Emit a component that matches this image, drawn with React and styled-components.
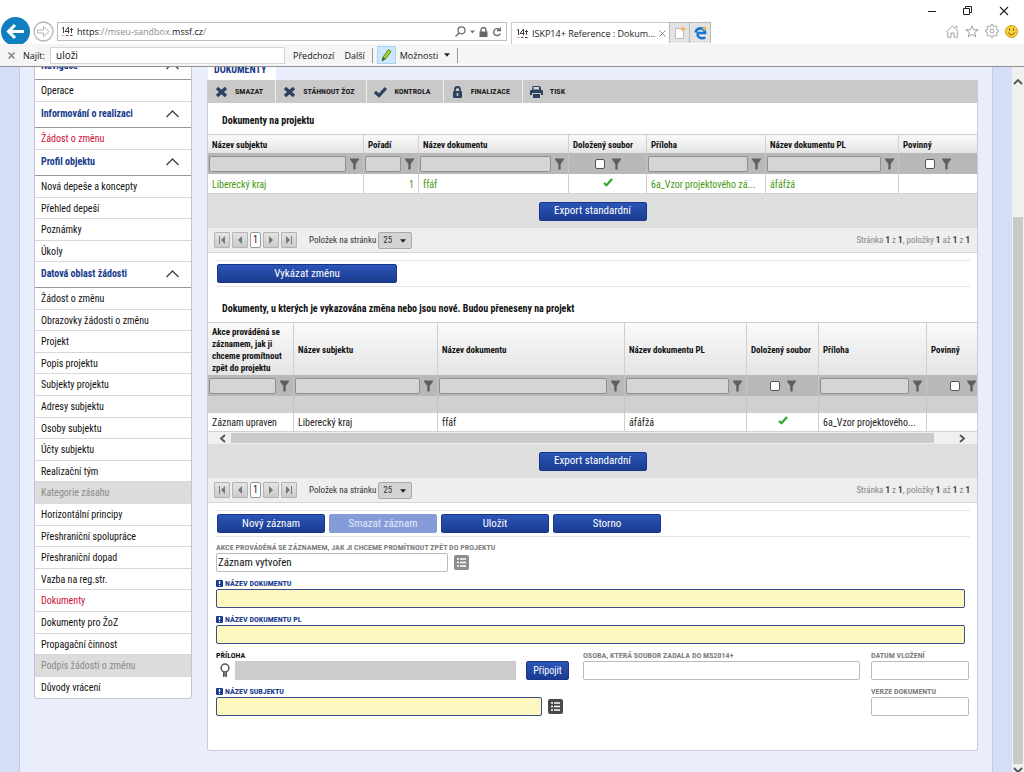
import React from "react";
import styled, { createGlobalStyle, css } from "styled-components";

const narrow = '"Roboto Condensed", "Liberation Sans Narrow", Roboto, sans-serif';
const chrome = '"Open Sans", "Noto Sans", sans-serif';

const GlobalStyle = createGlobalStyle`
  *, *::before, *::after { box-sizing: border-box; }
  body { margin: 0; font-family: ${narrow}; font-size: 10px; color: #222; background: #fff; }
  button, input, select { font: inherit; color: inherit; margin: 0; padding: 0; border: 0; border-radius: 0; outline: none; }
  button { background: none; white-space: nowrap; }
  svg { display: block; flex: none; }
  h2, ul, form { margin: 0; padding: 0; }
  a { color: inherit; text-decoration: none; }
`;

/* ---------- browser window ---------- */
const Window = styled.div`
  display: flex; flex-direction: column; height: 100vh; overflow: hidden;
`;
const WindowControls = styled.div`
  flex: none; display: flex; justify-content: flex-end; align-items: center; gap: 26px;
  height: 22px; padding-right: 15px;
`;
const NavBar = styled.div`
  flex: none; display: flex; height: 22px; font-family: ${chrome}; font-size: 9px; color: #222;
`;
const NavIcons = styled.div`
  display: flex; align-items: center; gap: 3px; width: 57px; padding: 0 2px 4px 1px;
`;
const Address = styled.div`
  display: flex; align-items: center; width: 450px; height: 19px; padding: 0 4px 0 3px;
  border: 1px solid #bdbdbd; background: #fff;
`;
const AddressText = styled.div`
  flex: 1; margin-left: 4px; color: #8a8a8a;
  b { font-weight: 400; color: #111; }
`;
const AddressIcons = styled.div`
  display: flex; align-items: center; gap: 4px;
`;
const BrowserTab = styled.div`
  display: flex; align-items: center; gap: 4px; width: 158px; margin-left: 4px; padding-left: 4px;
  border-left: 1px solid #ccc; border-top: 1px solid #ccc; white-space: nowrap; color: #222;
  svg:last-child { margin: 0 4px 0 auto; }
`;
const TabButton = styled.button`
  display: flex; align-items: center; justify-content: center; width: 21px; height: 21px;
  background: #e3e3e3; border: 1px solid #b9b9b9; border-bottom: 0;
  & + & { border-left: 0; }
`;
const BrowserTools = styled.div`
  display: flex; align-items: center; gap: 6px; margin-left: auto; padding: 0 6px 4px 0;
`;
const FindBar = styled.div`
  flex: none; display: flex; align-items: center; height: 23px; padding: 0 8px; border-bottom: 1px solid #909090;
  background: #f5f5f5; font-family: ${chrome}; font-size: 9px; color: #111;
  label { width: 27px; margin-left: 8px; }
`;
const FindInput = styled.input`
  width: 235px; height: 17px; padding: 0 5px; border: 1px solid #d5d5d5; background: #fff; font-size: 10px;
`;
const FindButton = styled.button`
  display: flex; align-items: center; gap: 6px; margin-left: ${(p) => p.$gap}px; height: 18px;
`;
const Highlight = styled.button`
  display: flex; align-items: center; justify-content: center; width: 19px; height: 18px;
  background: #cce6fb; border: 1px solid #a9d1f3;
`;
const Bar = styled.span`
  width: 1px; height: 15px; background: #999; margin: 0 4px 0 7px;
`;

/* ---------- page frame ---------- */
const Viewport = styled.div`
  flex: 1; min-height: 0; display: flex; background: #d6def7;
`;
const Sheet = styled.div`
  flex: 1; min-width: 0; display: flex; align-items: flex-start; gap: 15px; overflow: hidden;
  margin: 0 19px; padding: 0 14px; background: #eaeefc;
  border-left: 1px solid #c3cbe3; border-right: 1px solid #c0cae8;
`;
const Scrollbar = styled.div`
  display: flex; flex-direction: column; align-items: center; width: 12px; background: #f0f0f0;
  padding-top: 11px;
`;
const ScrollThumb = styled.div`
  flex: 1; width: 10px; margin: 132px 0 3px; background: #c9c9c9;
`;

/* ---------- side menu ---------- */
const Sidebar = styled.nav`
  flex: none; width: 158px; margin-top: -14px; border: 1px solid #c3c6cf; border-radius: 0 0 3px 3px;
  background: #fff; color: #111;
`;
const Group = styled.button`
  display: flex; align-items: center; justify-content: space-between; width: 100%; height: 26px;
  padding: 0 12px 2px 6px; border-bottom: 1px solid #999; font-weight: 700; color: #173a8c;
`;
const Items = styled.ul`
  list-style: none;
`;
/* Rows average a little under 22px, so two of every five are one pixel shorter. */
const Item = styled.li`
  height: 22px;
  border-bottom: 1px solid #d8d8d8;
  &:nth-child(5n + 2), &:nth-child(5n + 4) { height: 21px; }
  ${Items}:last-child > &:last-child { border-bottom: 0; }
  a {
    display: flex; align-items: center; height: 100%; padding: 0 6px;
    ${(p) => p.$tone === "active" && css`color: #cf1034;`}
    ${(p) => p.$tone === "off" && css`color: #8b8b8b; background: #dcdcdc;`}
  }
`;

/* ---------- main panel ---------- */
const Panel = styled.main`
  flex: 1; min-width: 0;
`;
const PanelTab = styled.div`
  display: flex; align-items: center; width: 68px; height: 22px; margin: -9px 0 0 1px; padding: 0 6px;
  background: #fff; font-weight: 700; color: #173a8c;
`;
const PanelBody = styled.div`
  border: 1px solid #c9ccd6; border-top: 0; border-radius: 0 0 3px 3px; background: #fff;
  padding-bottom: 34px;
`;
const Toolbar = styled.div`
  display: flex; height: 23px; background: #c9c9c9;
`;
const Tool = styled.button`
  display: flex; align-items: center; gap: 7px; padding: 0 12px 0 7px; font-size: 8px; font-weight: 700; color: #222;
  border-right: 1px solid #eee;
  &:last-child { border-right: 0; }
`;
const Title = styled.h2`
  padding: ${(p) => p.$top}px 14px 0; height: ${(p) => p.$top + 20}px; font-size: 10px; line-height: 14px;
  font-weight: 700; color: #111;
`;
const Grid = styled.table`
  width: 100%; table-layout: fixed; border-collapse: separate; border-spacing: 0; border-top: 1px solid #ccc;
  th, td { padding: 0 4px; border-right: 1px solid #cfcfcf; overflow: hidden; white-space: nowrap; text-align: left; }
  th:last-child, td:last-child { border-right: 0; }
`;
const HeadRow = styled.tr`
  height: ${(p) => p.$h}px; background: linear-gradient(#fafafa, #e4e4e4); font-size: 9px; color: #111;
  th { padding-top: 1px; line-height: 12px; font-weight: 700; background: none; }
  th:first-child { white-space: pre-line; }
`;
const FilterRow = styled.tr`
  height: 21px; background: #b8b8b8;
  td { padding: 0 4px 0 1px; border-right-color: #c4c4c4; overflow: hidden; }
`;
const SpacerRow = styled.tr`
  height: 17px; background: #d0d0d0;
  td { border-right-color: #c4c4c4; }
`;
const DataRow = styled.tr`
  height: ${(p) => (p.$green ? 20 : 19)}px; color: ${(p) => (p.$green ? "#46990f" : "#222")};
  td { padding-top: 2px; border-bottom: 1px solid #d2d2d2; line-height: 16px; }
`;
const FilterCell = styled.div`
  display: flex; align-items: center; gap: 4px; height: 21px;
  justify-content: ${(p) => (p.$check ? "center" : "flex-start")};
  ${(p) => p.$check && css`gap: 7px; padding-left: 3px;`}
  ${(p) => p.$cut && css`justify-content: flex-end; padding: 0; margin-right: -3px;`}
`;
const FilterInput = styled.input`
  flex: 1; min-width: 0; height: 16px; padding: 0 3px; background: #d5d5d5; border: 1px solid #8f8f8f; border-radius: 2px;
`;
const Tick = styled.input`
  appearance: none; width: 10px; height: 10px; background: #fff; border: 1px solid #555; border-radius: 2px;
`;
const Center = styled.div`
  display: flex; justify-content: center; padding-bottom: 5px;
`;
const Right = styled.div`
  text-align: right;
`;
const HScroll = styled.div`
  display: flex; align-items: center; height: 12px; padding: 0 11px; background: #f0f0f0;
`;
const HThumb = styled.div`
  flex: 1; height: 10px; margin: 0 24px 0 4px; background: #cacaca;
`;
const ExportBand = styled.div`
  display: flex; justify-content: center; align-items: center; height: 34px; background: #dedede;
`;
const Action = styled.button`
  flex: none; width: ${(p) => p.$w}px; height: 19px; border-radius: 2px; border: 1px solid #1a3585;
  background: linear-gradient(#2a55b8, #1b3b8f); color: #fff; font-size: ${(p) => p.$size || 11}px; line-height: 16px;
  &:disabled { background: #859cd8; border-color: #859cd8; color: #e6ebf8; }
`;
const Pager = styled.div`
  display: flex; align-items: center; height: 25px; padding: 0 7px 0 6px; background: #eee; border-bottom: 1px solid #d6d6d6;
  font-size: 9px; color: #333;
`;
const PageButton = styled.button`
  display: flex; align-items: center; justify-content: center; width: 16px; height: 16px; margin-right: 2px;
  border: 1px solid #b4b4b4; border-radius: 1px; background: linear-gradient(#e4e4e4, #cbcbcb);
`;
const PageNumber = styled.span`
  width: 11px; height: 16px; margin-right: 2px; border: 1px solid #999; border-radius: 2px; background: #fff;
  font-size: 10px; line-height: 14px; text-align: center; color: #111;
`;
const SizeLabel = styled.label`
  display: flex; align-items: center; gap: 2px; margin-left: 10px;
`;
const SelectBox = styled.span`
  position: relative; width: 34px; height: 17px;
  select {
    appearance: none; width: 100%; height: 100%; padding-left: 4px; background: #d3d3d3;
    border: 1px solid #a9a9a9; border-radius: 2px;
  }
  svg { position: absolute; right: 6px; top: 7px; pointer-events: none; }
`;
const Summary = styled.div`
  margin-left: auto; color: #888;
  b { font-weight: 700; color: #444; }
`;
const Actions = styled.div`
  display: flex; align-items: center; gap: 4px; height: 27px; margin: 7px 7px 0; padding-left: 2px;
  border-top: 1px solid #e6e6e6; border-bottom: 1px solid #e6e6e6;
`;

/* ---------- form ---------- */
const Form = styled.form`
  display: grid; grid-template-columns: 356px minmax(0, 1fr) 98px; column-gap: 11px; row-gap: 6px;
  padding: 5px 8px 0;
`;
const Field = styled.div`
  grid-column: ${(p) => p.$col || "auto"};
  ${(p) => p.$wide && css`padding-right: 4px;`}
`;
const Label = styled.label`
  display: flex; align-items: center; gap: 2px; height: 11px; font-size: 8px; line-height: 11px; font-weight: 700;
  text-transform: uppercase; white-space: nowrap; color: ${(p) => p.$color || "#808080"};
`;
const Line = styled.div`
  display: flex; align-items: center; height: 19px;
`;
const Text = styled.input`
  flex: ${(p) => (p.$w ? "none" : 1)}; width: ${(p) => (p.$w ? p.$w + "px" : "auto")}; min-width: 0; height: 19px;
  padding: 0 1px; border: 1px solid #bbb; border-radius: 2px; background: #fff; color: #111; font-size: 11px;
  ${(p) => p.$need && css`background: #fcf8c0; border-color: #3c4d86;`}
  ${(p) => p.$file && css`background: #ccc; border-color: #ccc; border-radius: 0; margin-right: 10px;`}
`;
const IconButton = styled.button`
  flex: none; display: flex; align-items: center; justify-content: center; width: 15px; height: 15px; margin-left: 6px;
  border-radius: 2px; background: ${(p) => (p.$light ? "#8e8e8e" : "#4a4a4a")};
`;

/* ---------- drawings ---------- */
const Favicon = () => (
  <svg width="12" height="11" viewBox="0 0 12 11" fill="none" stroke="#444" strokeWidth="1">
    <path d="M1 2.500 2.500 1v6M7.500 7.500V1L4 5.500h4.500M9 3.500h3M10.500 2v5" />
    <path d="M1 9.500h2.500" stroke="#c9a3a3" /><path d="M5 9.500h2.500" stroke="#a33" /><path d="M9 9.500h2.500" stroke="#445" />
  </svg>
);
const Funnel = () => (
  <svg width="9" height="12" viewBox="0 0 9 12"><path d="M0 .5h9v1L5.700 6v5.500H3.300V6L0 1.500z" fill="#5f5f5f" /></svg>
);
const GreenTick = () => (
  <svg width="10" height="9" viewBox="0 0 10 9" fill="none" stroke="#2aa82a" strokeWidth="2.200"><path d="M1 5l2.500 2.300L9 1" /></svg>
);
const Chevron = () => (
  <svg width="13" height="8" viewBox="0 0 13 8" fill="none" stroke="#444" strokeWidth="1.300"><path d="M.5 7 6.500 1l6 6" /></svg>
);
const Cross = () => (
  <svg width="13" height="12" viewBox="0 0 13 12" fill="none" stroke="#2d4160" strokeWidth="3.400"><path d="M2 2l9 8M11 2l-9 8" /></svg>
);
const Check = () => (
  <svg width="13" height="12" viewBox="0 0 13 12" fill="none" stroke="#2d4160" strokeWidth="3.200"><path d="M1 6l4 3.600L12 2" /></svg>
);
const Lock = () => (
  <svg width="13" height="12" viewBox="0 0 13 12">
    <path d="M4 6V3.500a2.500 2.500 0 0 1 5 0V6" fill="none" stroke="#2d4160" strokeWidth="1.800" />
    <rect x="2" y="5" width="9" height="7" rx="1" fill="#2d4160" /><path d="M6.500 7v3" stroke="#c9c9c9" strokeWidth="1.600" />
  </svg>
);
const Printer = () => (
  <svg width="13" height="12" viewBox="0 0 13 12" fill="#2d4160">
    <path d="M2.500 0h7l1.500 1.500V4H2zM1 4h11a1 1 0 0 1 1 1v4h-2V7H2v2H0V5a1 1 0 0 1 1-1zM3 8h7v4H3z" />
    <path d="M3.500 1h5.500v2.500H3.500z" fill="#d6d9de" /><path d="M3 7.500h7" stroke="#c9c9c9" />
  </svg>
);
const Arrow = ({ flip, bar }) => (
  <svg width="8" height="8" viewBox="0 0 8 8" fill="#777">
    <g transform={flip ? "matrix(-1 0 0 1 8 0)" : undefined}>
      <path d={bar ? "M7 0v8L3 4z" : "M6 0v8L2 4z"} />{bar && <path d="M1 0h1v8H1z" />}
    </g>
  </svg>
);
const Caret = ({ size = 6 }) => (
  <svg width={size} height="4" viewBox="0 0 7 4"><path d="M0 0h7L3.500 4z" fill="#222" /></svg>
);
const Angle = ({ d, w = 8, h = 9 }) => (
  <svg width={w} height={h} viewBox={`0 0 ${w} ${h}`} fill="none" stroke="#555" strokeWidth="1.900"><path d={d} /></svg>
);
const ListIcon = () => (
  <svg width="9" height="9" viewBox="0 0 9 9" fill="none" stroke="#fff" strokeWidth="1.500"><path d="M0 1h2M3 1h6M0 4.500h2M3 4.500h6M0 8h2M3 8h6" /></svg>
);
const Need = () => (
  <svg width="7" height="7" viewBox="0 0 7 7"><rect width="7" height="7" rx="1" fill="#173a8c" /><path d="M3.500 1v3M3.500 5v1" stroke="#fff" strokeWidth="1.300" /></svg>
);
const Ribbon = () => (
  <svg width="19" height="15" viewBox="0 0 19 15" fill="none" stroke="#555">
    <circle cx="9" cy="5" r="3.900" strokeWidth="1.500" /><path d="M7.500 9V14L9 12.500l1.500 1.500V9" fill="#777" />
  </svg>
);

const WindowIcons = () => (
  <>
    <svg width="9" height="10" viewBox="0 0 9 10" stroke="#222"><path d="M0 5.500h8" /></svg>
    <svg width="10" height="10" viewBox="0 0 10 10" fill="none" stroke="#222"><path d="M.5 2.500h6v6h-6zM2.500 2.500v-2h6v6h-2" /></svg>
    <svg width="10" height="10" viewBox="0 0 10 10" stroke="#222" strokeWidth="1.100"><path d="M1 1l8 8M9 1l-8 8" /></svg>
  </>
);
const BackForward = () => (
  <>
    <svg width="29" height="29" viewBox="0 0 29 29" overflow="hidden">
      <circle cx="14.500" cy="14.500" r="14.500" fill="#0f7fc0" />
      <path d="M23 14.500H8M14 8l-6.500 6.500L14 21" fill="none" stroke="#fff" strokeWidth="3" />
    </svg>
    <svg width="21" height="21" viewBox="0 0 21 21" fill="none" stroke="#b5b5b5">
      <circle cx="10.500" cy="10.500" r="9.500" strokeWidth="1.300" />
      <path d="M4.500 9h6V5.500l5.500 5-5.500 5V12h-6z" />
    </svg>
  </>
);

/* ---------- pieces ---------- */
const menu = [
  ["Navigace", ["Operace"]],
  ["Informování o realizaci", ["Žádost o změnu!"]],
  ["Profil objektu", ["Nová depeše a koncepty", "Přehled depeší", "Poznámky", "Úkoly"]],
  ["Datová oblast žádosti", [
    "Žádost o změnu", "Obrazovky žádosti o změnu", "Projekt", "Popis projektu", "Subjekty projektu",
    "Adresy subjektu", "Osoby subjektu", "Účty subjektu", "Realizační tým", "Kategorie zásahu-",
    "Horizontální principy", "Přeshraniční spolupráce", "Přeshraniční dopad", "Vazba na reg.str.",
    "Dokumenty!", "Dokumenty pro ŽoZ", "Propagační činnost", "Podpis žádosti o změnu-", "Důvody vrácení",
  ]],
];
const tone = (s) => (s.endsWith("!") ? "active" : s.endsWith("-") ? "off" : "plain");

function DataGrid({ cols, head, headHeight, checks, cells, green, spacer, cut }) {
  return (
    <Grid>
      <colgroup>{cols.map((w, i) => <col key={i} width={w || undefined} />)}</colgroup>
      <thead>
        <HeadRow $h={headHeight}>{head.map((h) => <th key={h} scope="col">{h}</th>)}</HeadRow>
      </thead>
      <tbody>
        <FilterRow>
          {head.map((h, i) => (
            <td key={h}>
              <FilterCell $check={checks.includes(i)} $cut={cut && i === head.length - 1}>
                {checks.includes(i) ? <Tick type="checkbox" aria-label={h} /> : <FilterInput aria-label={h} />}
                <Funnel />
              </FilterCell>
            </td>
          ))}
        </FilterRow>
        {spacer && <SpacerRow>{head.map((h) => <td key={h} />)}</SpacerRow>}
        <DataRow $green={green}>{cells.map((c, i) => <td key={i}>{c}</td>)}</DataRow>
      </tbody>
    </Grid>
  );
}

function GridFooter() {
  return (
    <>
      <ExportBand><Action $w={108}>Export standardní</Action></ExportBand>
      <Pager>
        <PageButton aria-label="První"><Arrow bar /></PageButton>
        <PageButton aria-label="Předchozí"><Arrow /></PageButton>
        <PageNumber>1</PageNumber>
        <PageButton aria-label="Další"><Arrow flip /></PageButton>
        <PageButton aria-label="Poslední"><Arrow flip bar /></PageButton>
        <SizeLabel>
          Položek na stránku
          <SelectBox><select defaultValue="25"><option>25</option></select><Caret /></SelectBox>
        </SizeLabel>
        <Summary>Stránka <b>1</b> z <b>1</b>, položky <b>1</b> až <b>1</b> z <b>1</b></Summary>
      </Pager>
    </>
  );
}

function Browser() {
  return (
    <>
      <WindowControls><WindowIcons /></WindowControls>
      <NavBar>
        <NavIcons><BackForward /></NavIcons>
        <Address>
          <Favicon />
          <AddressText><b>https</b>://mseu-sandbox.<b>mssf.cz</b>/</AddressText>
          <AddressIcons>
            <svg width="11" height="11" viewBox="0 0 11 11" fill="none" stroke="#666" strokeWidth="1.200"><circle cx="6.500" cy="4.300" r="3.500" /><path d="M4 7 .5 10.500" /></svg>
            <svg width="5" height="4" viewBox="0 0 7 4"><path d="M0 0h7L3.500 4z" fill="#777" /></svg>
            <svg width="9" height="10" viewBox="0 0 9 10"><path d="M2 5V3a2.500 2.500 0 0 1 5 0v2" fill="none" stroke="#666" strokeWidth="1.300" /><path d="M.5 4.500h8V10h-8z" fill="#666" /></svg>
            <svg width="10" height="10" viewBox="0 0 10 10" fill="none" stroke="#666" strokeWidth="1.300"><path d="M8.300 6.500A3.500 3.500 0 1 1 7.500 2.600M5 3.500h3.300V.5" /></svg>
          </AddressIcons>
        </Address>
        <BrowserTab>
          <Favicon />ISKP14+ Reference : Dokum...
          <svg width="7" height="7" viewBox="0 0 7 7" stroke="#888"><path d="M.5.5l6 6M6.500.5l-6 6" /></svg>
        </BrowserTab>
        <TabButton aria-label="Nová karta">
          <svg width="14" height="14" viewBox="0 0 14 14"><path d="M2.500 2.500h6l2 3v7h-8z" fill="#fff" stroke="#bbb" /><path d="M10 0l1 2 2 1-2 1-1 2-1-2-2-1 2-1z" fill="#f0b24a" /></svg>
        </TabButton>
        <TabButton aria-label="Edge">
          <svg width="13" height="14" viewBox="0 0 13 14"><path d="M11.500 11.500C5 14 2.800 9.500 4 7h8.300" fill="none" stroke="#1277cf" strokeWidth="2.400" /><path d="M1.500 6.500C3 1 10.500 1 11 6.500" fill="none" stroke="#1277cf" strokeWidth="2.600" /><path d="M10.500 0l1 1.500 1.500 1-1.500 1-1 1.500-1-1.500-1.500-1 1.500-1z" fill="#e8b45a" /></svg>
        </TabButton>
        <BrowserTools>
          <svg width="13" height="13" viewBox="0 0 13 13" fill="none" stroke="#a0a0a0"><path d="M.7 6.500 6.500 1l5.800 5.500-1 .8v5H8V8H5v4.300H1.800v-5zM9.500 1.500h1.500v2" /></svg>
          <svg width="14" height="13" viewBox="0 0 14 13" fill="none" stroke="#a0a0a0"><path d="M7 .8l1.700 4h4.500L9.600 7.500l1.300 4.400L7 9.300l-3.900 2.600 1.300-4.400L.8 4.800h4.500z" /></svg>
          <svg width="14" height="14" viewBox="0 0 14 14" fill="none" stroke="#a0a0a0"><circle cx="7" cy="7" r="2" /><path d="M6 .8h2l.4 1.600 1 .4 1.500-.9 1.300 1.300-.9 1.500.4 1 1.500.4v2l-1.500.3-.4 1 .9 1.500-1.300 1.300-1.500-.9-1 .4L8 13.200H6l-.4-1.500-1-.4-1.500.9-1.300-1.300.9-1.500-.4-1L.8 8V6l1.500-.3.4-1-.9-1.500 1.300-1.300 1.500.9 1-.4z" /></svg>
          <svg width="13" height="13" viewBox="0 0 13 13"><circle cx="6.500" cy="6.500" r="6" fill="#f6cf3b" stroke="#c39a1c" /><path d="M4.500 3.500v2M8.500 3.500v2M3.500 7.500c1 3 5 3 6 0" stroke="#6b4a10" fill="none" /></svg>
        </BrowserTools>
      </NavBar>
      <FindBar>
        <svg width="7" height="7" viewBox="0 0 7 7" stroke="#777" strokeWidth="1.200"><path d="M.5.5l6 6M6.500.5l-6 6" /></svg>
        <label htmlFor="find">Najít:</label>
        <FindInput id="find" defaultValue="uloži" />
        <FindButton $gap={8}>Předchozí</FindButton>
        <FindButton $gap={10}>Další</FindButton>
        <Bar />
        <Highlight aria-label="Zvýraznit">
          <svg width="11" height="14" viewBox="0 0 11 14"><path d="M1 13l1-4L7.500 1.500 10 3.500 4.500 11z" fill="#a6cf3a" stroke="#5d8a2a" /><path d="M1 13l1-4 2.500 2z" fill="#555" /></svg>
        </Highlight>
        <FindButton $gap={4}>Možnosti <Caret /></FindButton>
        <Bar />
      </FindBar>
    </>
  );
}

export default function App() {
  return (
    <Window>
      <GlobalStyle />
      <Browser />
      <Viewport>
        <Sheet>
          <Sidebar>
            {menu.map(([group, items]) => (
              <React.Fragment key={group}>
                <Group>{group}<Chevron /></Group>
                <Items>
                  {items.map((s) => (
                    <Item key={s} $tone={tone(s)}><a href="#menu">{s.replace(/[!-]$/, "")}</a></Item>
                  ))}
                </Items>
              </React.Fragment>
            ))}
          </Sidebar>
          <Panel>
            <PanelTab>DOKUMENTY</PanelTab>
            <PanelBody>
              <Toolbar>
                <Tool><Cross />SMAZAT</Tool>
                <Tool><Cross />STÁHNOUT ŽOZ</Tool>
                <Tool><Check />KONTROLA</Tool>
                <Tool><Lock />FINALIZACE</Tool>
                <Tool><Printer />TISK</Tool>
              </Toolbar>
              <Title $top={11}>Dokumenty na projektu</Title>
              <DataGrid
                cols={[156, 55, 150, 78, 119, null, 78]}
                head={["Název subjektu", "Pořadí", "Název dokumentu", "Doložený soubor", "Příloha", "Název dokumentu PL", "Povinný"]}
                headHeight={18} checks={[3, 6]} green
                cells={["Liberecký kraj", <Right>1</Right>, "ffáf", <Center><GreenTick /></Center>, "6a_Vzor projektového zá...", "áfáfžá", ""]}
              />
              <GridFooter />
              <Actions><Action $w={180}>Vykázat změnu</Action></Actions>
              <Title $top={15}>Dokumenty, u kterých je vykazována změna nebo jsou nové. Budou přeneseny na projekt</Title>
              <DataGrid
                cols={[86, 144, null, 122, 72, 108, 50]}
                head={["Akce prováděná se\nzáznamem, jak ji\nchceme promítnout\nzpět do projektu", "Název subjektu", "Název dokumentu", "Název dokumentu PL", "Doložený soubor", "Příloha", "Povinný"]}
                headHeight={52} checks={[4, 6]} spacer cut
                cells={["Záznam upraven", "Liberecký kraj", "ffáf", "áfáfžá", <Center><GreenTick /></Center>, "6a_Vzor projektového...", ""]}
              />
              <HScroll>
                <Angle d="M6 1 2 4.500 6 8" /><HThumb /><Angle d="M2 1l4 3.500L2 8" />
              </HScroll>
              <GridFooter />
              <Actions>
                <Action $w={108}>Nový záznam</Action>
                <Action $w={108} disabled>Smazat záznam</Action>
                <Action $w={108}>Uložit</Action>
                <Action $w={108}>Storno</Action>
              </Actions>
              <Form>
                <Field $col="1 / -1">
                  <Label htmlFor="akce">Akce prováděná se záznamem, jak ji chceme promítnout zpět do projektu</Label>
                  <Line><Text id="akce" $w={232} defaultValue="Záznam vytvořen" /><IconButton type="button" $light aria-label="Seznam"><ListIcon /></IconButton></Line>
                </Field>
                <Field $col="1 / -1" $wide>
                  <Label htmlFor="nazev" $color="#173a8c"><Need />Název dokumentu</Label>
                  <Line><Text id="nazev" $need /></Line>
                </Field>
                <Field $col="1 / -1" $wide>
                  <Label htmlFor="nazevpl" $color="#173a8c"><Need />Název dokumentu PL</Label>
                  <Line><Text id="nazevpl" $need /></Line>
                </Field>
                <Field>
                  <Label htmlFor="priloha" $color="#111">Příloha</Label>
                  <Line><Ribbon /><Text id="priloha" $w={281} $file /><Action type="button" $w={43} $size={10}>Připojit</Action></Line>
                </Field>
                <Field>
                  <Label htmlFor="osoba">Osoba, která soubor zadala do MS2014+</Label>
                  <Line><Text id="osoba" /></Line>
                </Field>
                <Field>
                  <Label htmlFor="datum">Datum vložení</Label>
                  <Line><Text id="datum" /></Line>
                </Field>
                <Field>
                  <Label htmlFor="subjekt" $color="#173a8c"><Need />Název subjektu</Label>
                  <Line><Text id="subjekt" $w={326} $need /><IconButton type="button" aria-label="Seznam"><ListIcon /></IconButton></Line>
                </Field>
                <Field $col="3">
                  <Label htmlFor="verze">Verze dokumentu</Label>
                  <Line><Text id="verze" /></Line>
                </Field>
              </Form>
            </PanelBody>
          </Panel>
        </Sheet>
        <Scrollbar>
          <Angle w={10} h={7} d="M1 6l4-4 4 4" />
          <ScrollThumb />
          <Angle w={10} h={5} d="M1 1l4 4 4-4" />
        </Scrollbar>
      </Viewport>
    </Window>
  );
}
